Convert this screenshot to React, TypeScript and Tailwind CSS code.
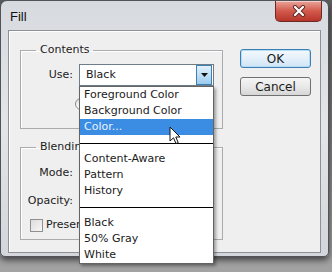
import React from 'react';

const listItems: Array<string | null> = [
  'Foreground Color',
  'Background Color',
  'Color...',
  null,
  'Content-Aware',
  'Pattern',
  'History',
  null,
  'Black',
  '50% Gray',
  'White',
];

const CloseButton = () => (
  <div className="w-[47px] h-[21px] mr-[6px] rounded-b-[5px] border border-t-0 border-[#6b2a24] bg-gradient-to-b from-[#e8a49a] via-[#d2594c] to-[#b8342a] flex items-center justify-center shadow-[inset_0_1px_0_rgba(255,255,255,0.5)]">
    <svg width="14" height="12" viewBox="0 0 14 12">
      <path d="M3 2 L11 10 M11 2 L3 10" stroke="#5a2a26" strokeWidth="4" strokeLinecap="round" />
      <path d="M3 2 L11 10 M11 2 L3 10" stroke="#ffffff" strokeWidth="2.2" strokeLinecap="round" />
    </svg>
  </div>
);

const Cursor = () => (
  <svg className="absolute left-[169px] top-[126px]" width="13" height="20" viewBox="0 0 13 20">
    <path
      d="M1 1 L1 15 L4.5 11.8 L7 17.5 L9.2 16.6 L6.8 11 L11 11 Z"
      fill="#ffffff"
      stroke="#111111"
      strokeWidth="1"
      strokeLinejoin="round"
    />
  </svg>
);

export default function App() {
  return (
    <div className="relative w-[332px] h-[272px] overflow-hidden bg-gradient-to-b from-[#5e5e5e] via-[#7c7c7c] to-[#a3a3a3] font-['DejaVu_Sans',sans-serif] text-[11px] text-[#1b1b1b]">
      {/* Window */}
      <div className="w-[329px] h-[257px] flex flex-col rounded-t-[7px] rounded-b-[5px] border border-[#505459] bg-gradient-to-b from-[#d7dadf] via-[#e3e5e8] to-[#d3d6da] shadow-[0_3px_6px_rgba(0,0,0,0.6)]">
        <div className="h-[29px] flex items-start justify-between">
          <span className="pl-[9px] pt-[8px] leading-[15px] text-[13px] font-['Liberation_Sans',sans-serif] text-[#111]">
            Fill
          </span>
          <CloseButton />
        </div>

        {/* Client area */}
        <div className="mx-[7px] h-[223px] border border-[#8d9096] bg-[#efefef] shadow-[inset_1px_1px_0_#ffffff]">
          <div className="flex pl-[11px] pt-[12px]">
            <div className="w-[203px] flex flex-col gap-[11px]">
              <fieldset className="h-[86px] border border-[#a9abae] shadow-[inset_1px_1px_0_#ffffff]">
                <legend className="ml-[15px] px-[4px] leading-[14px]">Contents</legend>
                <div className="flex items-center mt-[7px]">
                  <span className="w-[52px] text-right leading-[14px]">Use:</span>
                  <div className="ml-[6px] w-[135px] h-[22px] flex items-center border border-[#6f7d8b] bg-white">
                    <span className="flex-1 pl-[6px] leading-[14px]">Black</span>
                    <div className="w-[16px] h-[20px] mr-[1px] flex items-center justify-center border border-[#3c7fb1] bg-gradient-to-b from-[#e3f1fb] to-[#9ccbef]">
                      <svg width="7" height="4" viewBox="0 0 7 4">
                        <path d="M0 0 L7 0 L3.5 4 Z" fill="#111" />
                      </svg>
                    </div>
                  </div>
                </div>
                <div className="flex mt-[12px] pl-[54px]">
                  <div className="w-[12px] h-[12px] rounded-full border border-[#8a8a8a] bg-gradient-to-b from-[#e6e6e6] to-[#ffffff]" />
                </div>
              </fieldset>

              <fieldset className="h-[100px] border border-[#a9abae] shadow-[inset_1px_1px_0_#ffffff]">
                <legend className="ml-[15px] pl-[4px] leading-[14px]">
                  <span className="block w-[39px] overflow-hidden whitespace-nowrap">Blending</span>
                </legend>
                <div className="mt-[12px] w-[52px] text-right leading-[14px]">Mode:</div>
                <div className="mt-[14px] w-[52px] text-right leading-[14px]">Opacity:</div>
                <div className="mt-[10px] pl-[9px] flex items-center gap-[3px]">
                  <div className="w-[13px] h-[13px] border border-[#8e8f8f] bg-gradient-to-br from-[#dcdcdc] to-[#f7f7f7]" />
                  <span className="w-[33px] overflow-hidden whitespace-nowrap leading-[14px]">Preserve Transparency</span>
                </div>
              </fieldset>
            </div>

            <div className="ml-[17px] pt-[6px] flex flex-col gap-[9px]">
              <button className="w-[71px] h-[19px] rounded-[3px] border border-[#3c7fb1] bg-gradient-to-b from-[#f4f9fd] via-[#e4f0fa] to-[#cfe4f5] shadow-[inset_0_0_0_1px_#b4dcf7] leading-[14px] text-[12px]">
                OK
              </button>
              <button className="w-[71px] h-[19px] rounded-[3px] border border-[#707070] bg-gradient-to-b from-[#f5f5f5] via-[#e9e9e9] to-[#d6d6d6] leading-[14px] text-[12px]">
                Cancel
              </button>
            </div>
          </div>
        </div>
      </div>

      {/* Open dropdown list */}
      <div className="absolute left-[79px] top-[86px] w-[135px] border border-[#646464] bg-white shadow-[2px_2px_3px_rgba(0,0,0,0.35)]">
        {listItems.map((item, i) =>
          item === null ? (
            <div key={i} className="h-[16px] flex items-center">
              <div className="w-full h-px bg-black" />
            </div>
          ) : (
            <div
              key={i}
              className={`h-[16px] pl-[4px] leading-[16px] ${
                item === 'Color...' ? 'bg-[#3b8de3] text-[#e8f2ff]' : ''
              }`}
            >
              {item}
            </div>
          )
        )}
      </div>
      <Cursor />
    </div>
  );
}
